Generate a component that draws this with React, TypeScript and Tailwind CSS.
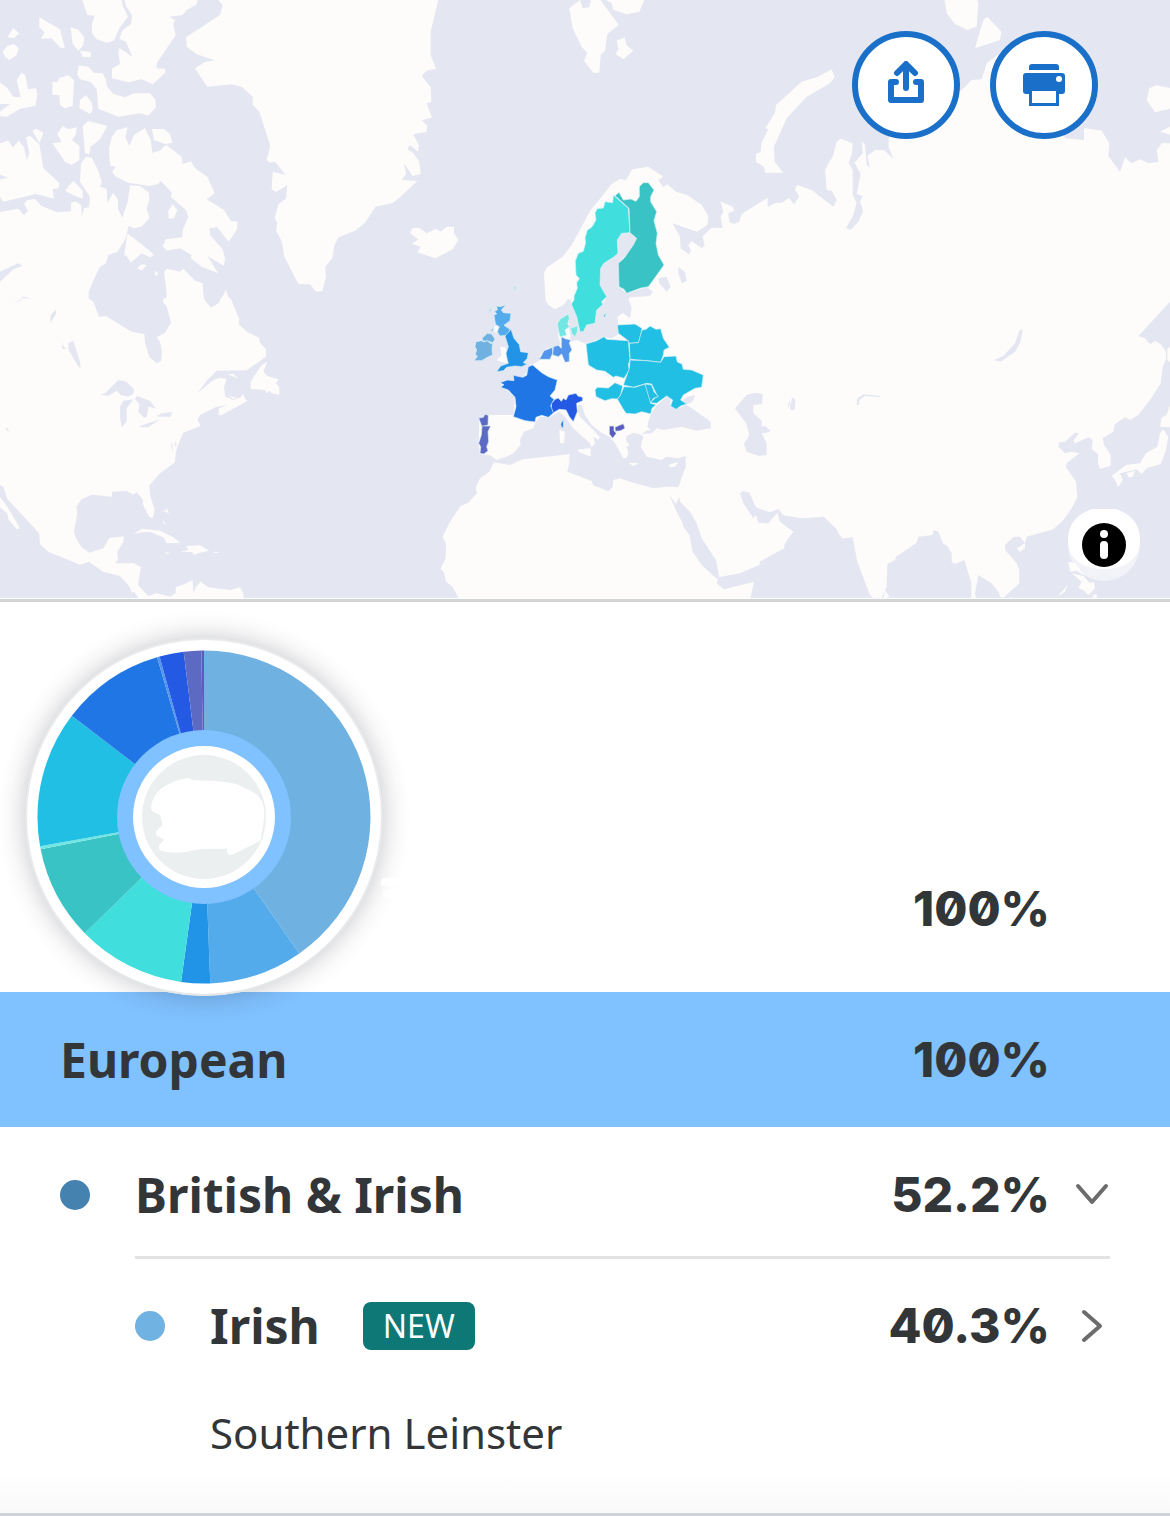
import { useState } from "react";

type Shape = { fill: string; d: string };
type Slice = { color: string; value: number };

const slices: Slice[] = [
  { color: "#6fb1e1", value: 40.3 },
  { color: "#54abec", value: 9.1 },
  { color: "#2294e7", value: 2.8 },
  { color: "#40dedd", value: 10.5 },
  { color: "#3ac3c5", value: 9.2 },
  { color: "#72e6e2", value: 0.3 },
  { color: "#22bfe4", value: 13.2 },
  { color: "#2176e6", value: 10.05 },
  { color: "#5595ec", value: 0.25 },
  { color: "#2359e3", value: 2.35 },
  { color: "#5c6ac4", value: 1.7 },
  { color: "#5b5bc0", value: 0.25 },
];

// The map is split in six tiles, each with its own origin
const northWestLand = [
  "M0 636 55 626 72 646 84 632 72 612 82 600 105 597 125 618 145 626 172 637 213 634 213 610 225 604 243 614 246 650 252 625 267 622 270 590 240 545 243 490 258 470 276 474 295 512 305 545 300 560 320 566 322 608 340 578 354 600 354 628 367 653 383 606 390 556 420 558 447 578 448 600 440 625 448 655 425 680 402 685 386 678 376 718 352 755 325 765 318 790 300 800 283 835 266 875 266 905 0 905Z",
  "M498 905 500 880 492 815 500 806 540 815 550 806 585 842 608 850 612 905Z M660 905 677 870 692 905Z",
  "M40 84 58 100 42 114 22 112Z M8 155 22 138 42 132 56 145 50 165 28 180 15 170Z M118 52 180 88 195 146 180 142 155 115 122 116 134 97 118 82Z",
  "M212 82 235 90 253 112 250 135 235 152 218 132Z M240 152 272 156 273 172 248 170Z",
  "M245-5 262 45 284 47 275 75 276 100 290 118 320 128 342 122 358 85 384 50 367 15 365-5Z",
  "M372-5 378 18 396 46 393 72 368 90 358 116 378 125 397 170 358 144 355 158 360 192 336 206 336 235 385 247 425 238 458 253 497 217 495 206 470 205 470 190 527 106 520 72 525 60 508 50 548 45 560 30 588 15 595-5Z",
  "M232 222 236 196 265 200 282 218 308 220 318 240 320 258 340 282 375 292 402 280 450 280 466 298 468 322 445 347 420 340 355 350 295 326 290 268 272 246 240 238Z",
  "M258 285 276 310 278 330 270 342 238 324 240 300Z M157 245 172 246 178 234 205 226 222 240 218 318 195 325 180 316 178 286 157 284Z",
  "M0 248 20 262 40 290 62 292 50 240 65 218 76 226 84 268 108 264 112 285 106 318 60 326 20 350 0 348 0 335 30 312 0 312Z",
  "M97 392 108 386 130 398 118 428Z M172 402 188 378 205 388 230 382 228 402 216 420 238 438 238 480 215 495 195 485 157 430 185 426Z M248 378 265 363 322 378 300 418 272 440 268 463 255 460Z",
  "M0 430 25 422 38 442 57 422 72 442 80 480 88 460 78 412 90 408 118 432 130 505 178 548 176 565 158 568 162 596 108 582 10 605 0 590 0 538 25 533 0 524Z",
  "M195 572 220 542 248 572 248 596 225 588Z M378 765 372 770 382 700 440 745 462 765 450 772 425 760 392 788Z M412 805 425 793 440 796 425 812Z M462 812 475 820 468 830Z M505 632 518 612 532 630 522 655 506 656Z",
  "M330 497 327 445 335 412 350 390 383 382 376 412 388 437 402 405 435 384 452 420 457 458 480 452 498 434 545 470 548 492 572 484 588 508 622 530 644 580 620 598 672 630 692 662 713 665 710 690 686 725 652 682 628 685 630 705 668 748 675 775 672 797 622 768 655 820 605 800 572 775 575 765 540 745 500 752 488 738 498 718 547 712 548 690 565 650 558 630 512 590 516 578 482 542 475 552 448 558 385 548 348 530 336 515 348 500Z",
  "M456 387 492 387 510 402 517 428 495 432 462 420Z",
  "M650-5 668 15 660 45 558 112 560 140 590 163 645 181 615 186 585 205 622 260 695 253 725 260 758 290 758 315 778 335 811 438 800 480 810 488 825 485 856 524 818 516 815 568 828 576 862 556 858 596 835 612 824 655 832 668 828 692 846 725 852 768 895 852 930 853 948 875 967 874 978 830 976 800 997 775 1003 735 1016 712 1065 692 1095 668 1127 620 1180 608 1200 592 1252 543 1205 540 1218 522 1212 490 1238 528 1262 522 1258 485 1240 460 1222 448 1230 435 1254 455 1256 435 1240 403 1280 395 1282 378 1266 360 1296 353 1280 310 1294 305 1292 262 1265 228 1280 212 1308 206 1292 165 1292 95 1316-5Z",
];

const southWestLand = [
  "M0-5 265-5 280 5 297 50 318 48 395 95 433 102 435 128 448 170 470 190 484 182 486 155 480 125 470 112 495 98 513 68 500 20 488 5 492-5 612-5 618 5 633 23 658 8 662-5 692-5 718 58 716 73 742 96 777 113 780 128 798 148 798 170 780 183 740 211 650 212 622 240 592 280 640 240 658 234 680 236 672 262 676 290 700 300 722 292 730 282 735 298 743 302 664 346 656 345 657 325 682 314 650 320 600 345 592 358 602 378 550 398 536 430 528 455 524 488 480 520 448 556 450 585 464 630 458 654 448 652 428 612 430 600 410 577 400 584 380 573 337 575 335 590 275 584 245 598 230 618 231 645 222 695 228 715 245 742 268 758 310 745 328 714 371 709 370 725 352 755 354 780 345 790 402 790 423 802 414 855 444 888 470 880 510 890 527 880 527 862 552 853 578 840 580 880 588 860 602 845 625 862 690 870 720 862 730 880 730 900 420 900 402 875 395 878 390 862 360 828 310 815 267 785 240 794 145 755 120 732 118 702 100 680 22 597 10 560 0 555Z",
  "M0 590 22 620 60 685 50 688 25 658 22 640 0 622Z",
  "M752 267 752 245 785 195 802 185 790 215 802 228 835 238 828 250 838 262 838 285 815 280 808 272 800 280 795 270Z M680 222 700 222 715 235Z M680 282 695 290 710 292 700 298Z",
  "M402 702 425 686 480 692 520 712 542 728 500 730 490 712 450 696 425 697Z M540 755 565 750 558 738 600 736 628 752 600 758 583 764 575 756Z M492 757 515 759 500 762Z M638 755 662 757 645 760Z M480 630 498 632 500 622 507 640Z M488 658 500 678 490 668Z",
];

const northLand = [
  "M508 25 540 0 548 25 568 22 574-5 598-5 656 75 622 102 615 152 602 165 598 218 580 218 552 182 562 160 545 140 518 85Z",
  "M610-5 635 10 640 30 680 43 718 35 735-5Z M650 122 674 112 680 135 700 152 670 178 647 162 656 148Z",
  "M30 700 38 683 60 685 80 700 108 686 122 695 140 680 162 680 162 700 175 720 158 748 106 775 52 757 62 740 35 732 55 718Z",
  "M437 905 432 820 440 803 490 768 515 735 572 630 605 590 635 552 660 537 678 540 697 508 745 500 790 530 775 540 790 562 802 553 828 575 862 585 905 615 925 648 922 675 890 695 860 685 818 670 840 710 842 745 868 764 872 750 865 735 875 724 905 744 914 738 908 708 935 683 968 684 962 650 970 635 962 605 998 620 1003 632 985 640 988 665 1002 672 1018 665 1025 642 1103 593 1103 620 1130 608 1130 905 690 905 690 892 750 888 758 875 742 862 680 880 657 860 655 790 700 740 710 715 690 698 665 700 652 720 652 760 615 790 600 805 600 855 620 890 612 905 522 905 500 895 490 905Z",
];

const southLand = [
  "M1205-5 685-5 695 25 690 55 668 38 652 52 655 75 655 103 635 115 610 112 558 132 530 120 510 125 512 110 505 80 508 50 500 42 472 65 475 110 482 135 440 145 420 165 420 180 395 195 370 230 340 240 300 250 325 272 345 292 340 345 265 345 238 355 236 430 240 462 270 466 290 480 325 468 340 460 362 435 360 420 372 395 400 385 405 370 420 350 448 352 478 335 495 350 520 385 570 430 575 442 585 430 580 410 595 420 600 412 580 390 540 350 532 330 535 315 545 315 555 345 575 375 605 398 628 410 645 430 670 475 680 475 685 458 680 440 688 436 678 420 680 408 700 398 725 405 730 412 722 440 740 470 785 480 800 470 835 475 857 468 857 500 835 562 800 560 760 565 690 545 660 535 640 540 638 560 625 574 580 556 575 543 502 515 508 490 508 462 488 465 368 478 330 495 282 487 268 515 240 535 228 560 230 580 205 608 182 618 150 665 128 710 138 732 137 775 122 805 133 820 138 845 158 860 178 900 1050 900 1062 845 972 868 950 850 955 832 1020 820 1078 795 1080 785 1152 745 1155 730 1180 695 1140 665 1132 638 1105 670 1075 668 1068 645 1060 655 1030 610 1020 580 1030 573 1048 578 1068 622 1110 637 1135 627 1150 645 1205 655Z",
  "M437-5 438 0 445 15 465 28 490 15 505-5Z M512-5 515 10 530 55 540 92 550 95 560 75 585 70 590 30 612-5Z",
  "M478 390 495 395 492 430 480 428Z M535 448 572 445 572 470 535 455Z M685 488 718 490 700 498Z M805 495 835 485 825 500 810 502Z M300 140 318 142 322 190 300 185 290 180 305 165Z M282 80 296 72 292 98 284 95Z",
];

const northEastLand = [
  "M18 315 95 245 140 232 185 208 194 232 180 250 110 290 50 355 12 440 14 485 40 518-15 518-18 500-42 485-42 462-28 455-26 430-5 388-14 385 15 338Z",
  "M0 622 15 610 35 608 57 594 72 613 88 590 75 568 82 555 125 570 190 620 200 600 185 572 170 570 165 510 190 465 200 425 212 416 248 430 246 460 236 488 248 510 248 585 260 608 248 650 228 684 242 690 265 665 280 632 270 605 278 588 260 582 272 522 254 488 278 460 276 424 285 435 290 495 300 502 292 468 315 450 342 450 370 476 356 440 356 415 400 350 575 270 605 240 635 238 650 190 690 160 800 200 885 415 942 420 942 384 995 392 1018 430 1015 468 1050 516 1065 472 1085 490 1110 478 1135 490 1165 485 1160 450 1175 430 1205 430 1205 905 0 905Z",
  "M523-5 530 40 555 72 592 90 620 80 625 10 620-5Z M640 60 652 50 694 95 690 120 615 145Z M1130 300 1138 265 1160 256 1205 265 1205 325 1155 337Z M1170 395 1205 378 1205 405Z",
];

const southEastLand = [
  "M-5-5 1205-5 1200 5 1105 108 1125 115 1140 133 1155 122 1175 135 1188 155 1188 178 1178 200 1172 250 1140 300 1105 345 1080 360 1065 352 1035 372 1030 395 998 415 1002 435 1022 465 1022 497 990 507 984 490 984 462 965 447 968 420 955 412 915 430 910 422 927 400 915 398 885 425 868 427 865 440 885 460 905 455 928 460 890 490 888 502 918 545 922 590 905 625 880 660 850 688 770 710 765 730 750 710 732 710 705 735 705 750 740 790 748 810 748 850 700 893 690 890 687 878 665 850 625 825 615 880 620 905 604 905 604 848 583 780 555 792 545 785 545 760 530 735 520 732 505 695 490 690 488 705 445 710 440 728 378 770 375 780 352 792 350 860 335 893 310 893 300 885 262 785 248 712 218 716 205 700 200 688 162 650 100 655 40 645 25 625 0 635Z",
  "M1205 300 1190 345 1175 352 1170 380 1205 382Z M1180 388 1195 410 1188 450 1172 492 1130 505 1115 522 1100 508 1050 520 1058 540 1045 562 1035 540 1025 528 1068 495 1110 490 1128 460 1162 440 1170 400Z M1070 520 1095 512 1088 530 1075 532Z",
  "M1192 145 1205 140 1205 190 1192 180Z M740 745 765 730 765 745 750 756Z M345 870 358 890 340 897Z M895 785 915 790 945 828 920 812 900 815Z M905 820 940 828 960 850 972 845 975 865 955 885 940 870 925 865 935 845Z M862 890 893 855 885 875Z M965 890 980 880 980 897Z",
];

const northWestWater = ["M0 815 55 790 68 797 40 808 0 845Z M55 897 70 890 108 897Z"];

const southWestWater = [
  "M302 284 315 280 355 240 380 245 402 268 400 282 385 290 362 285 350 272 325 288Z",
  "M360 320 370 302 400 298 380 325 380 365 365 382 360 350Z M405 298 412 288 450 303 467 325 445 320 440 352 430 352 415 335 418 312Z",
  "M420 378 480 358 445 382 422 382Z M470 348 485 340 517 336 512 350 476 350Z M205 130 220 122 240 185 242 206 232 195 205 148Z",
  "M187 125 190 138 198 146 187 148Z M152 45 168 30 168 42 150 70Z M38 12 60 0 70-3 60 2Z M15 382 24 386 26 398Z M512 428 518 436 520 462 516 445Z M528 422 530 440 524 436Z",
];

const northWater = ["M775 835 800 830 812 862 800 875 778 850Z M835 800 855 815 860 842 845 850 835 820Z"];

const southWater = [
  "M808 585 828 612 838 590 840 605 870 635 890 670 905 715 948 780 958 834 950 836 905 795 878 755 868 705 850 680 848 670 830 635Z",
  "M742 380 745 365 752 345 768 318 800 290 815 295 810 310 825 328 860 315 880 328 932 365 932 385 890 392 845 380 790 390 770 385 755 400 725 402 740 392 752 390Z",
  "M848 300 862 290 885 285 878 305 855 315Z",
  "M1005 325 1040 285 1065 278 1088 282 1086 312 1060 315 1060 340 1085 362 1085 380 1095 378 1112 392 1100 398 1085 400 1100 430 1100 465 1078 468 1040 455 1032 432 1048 405 1038 370Z",
  "M1162 328 1168 300 1172 318 1176 292 1186 300 1184 330 1172 330 1170 312Z",
];

const southEastWater = [
  "M260 315 262 295 280 283 330 288 330 292 285 288 268 300 267 315Z",
  "M672 180 700 168 735 130 748 92 758 88 750 130 735 155 692 185Z",
];

// Regions found in the results, placed on the southern Europe tile
const regions: Shape[] = [
  { fill: "#6fb1e1", d: "M222 182 232 170 226 162 230 150 225 140 228 125 245 122 250 126 262 122 270 130 278 130 276 148 278 165 262 172 245 182Z" },
  { fill: "#6fb1e1", d: "M246 115 262 100 275 102 285 118 278 128 262 122 250 124Z" },
  { fill: "#54abec", d: "M285 65 282 45 290 42 284 34 292 30 290 18 302 20 318 14 304 30 310 38 333 40 330 62 312 76 330 88 325 105 300 108 292 95 298 80 288 75Z M266 40 274 18 272 32Z M272 92 280 82 278 94Z" },
  { fill: "#2294e7", d: "M315 108 333 88 342 115 358 134 362 155 385 158 382 175 370 188 382 192 365 200 345 198 320 202 310 212 290 215 302 198 325 190 322 180 318 160 325 140Z" },
  { fill: "#2176e6", d: "M300 248 322 240 342 242 340 226 368 232 380 226 385 200 398 195 425 218 445 230 472 240 465 270 450 288 462 298 452 318 464 336 445 352 425 346 408 352 405 366 375 362 340 350 348 320 345 292 325 270 302 262 312 254Z" },
  { fill: "#2176e6", d: "M482 372 490 358 490 382 485 384Z" },
  { fill: "#2359e3", d: "M455 310 465 298 475 294 484 304 490 295 498 300 505 285 528 280 534 288 548 292 548 302 530 310 532 335 520 365 508 350 498 330 478 328 460 338 454 322Z" },
  { fill: "#5595ec", d: "M418 178 432 152 458 142 458 160 450 178Z" },
  { fill: "#5595ec", d: "M460 140 475 136 484 145 484 110 496 116 512 120 508 130 516 150 508 160 508 185 495 187 485 162 475 170 458 165Z" },
  { fill: "#72e6e2", d: "M472 70 482 56 505 42 508 55 503 72 508 80 495 90 500 106 480 110 475 90Z M512 85 533 78 532 95 525 110 515 100Z" },
  { fill: "#3ac3c5", d: "M610 48 620 36 615 52Z M342-40 346-40 346-24Z" },
  { fill: "#40dedd", d: "M640-315 685-275 690-202 665-200 652-180 654-140 640-128 612-110 602-95 600-45 620-10 605 5 608 14 590 30 585 70 560 75 550 95 540 95 530 50 514 12 522 0 522-12 532-35 530-52 538-64 528-75 526-118 535-140 550-146 557-172 555-186 562-210 575-218 588-240 585-262 592-274 610-276 615-295 638-292Z" },
  { fill: "#3ac3c5", d: "M645-313 657-323 670-300 692-303 708-296 718-310 718-340 730-352 745-352 762-330 752-310 752-295 770-265 762-238 772-200 768-170 775-135 792-105 760-60 745-40 720-35 680-20 672-32 657-40 655-110 672-125 700-165 710-185 690-202 687-275Z" },
  { fill: "#22bfe4", d: "M652 75 705 72 726 85 722 108 715 128 688 130 682 120 655 100Z" },
  { fill: "#22bfe4", d: "M726 90 738 88 750 78 768 88 782 86 790 115 808 142 792 150 790 165 782 187 740 182 690 178 688 130 715 128Z" },
  { fill: "#22bfe4", d: "M558 132 590 122 612 110 620 118 685 122 690 178 685 195 688 210 672 235 648 228 640 232 615 214 590 210 565 195Z" },
  { fill: "#22bfe4", d: "M690 180 740 182 782 187 792 170 828 168 832 186 846 192 850 208 875 210 910 225 905 262 885 265 850 285 842 300 860 312 842 318 828 328 812 318 818 300 800 288 770 310 750 308 772 288 755 252 740 250 700 262 670 255 688 205Z" },
  { fill: "#22bfe4", d: "M585 270 592 262 625 264 645 248 668 258 662 285 652 297 635 296 615 302 588 290Z" },
  { fill: "#22bfe4", d: "M652 297 660 288 672 260 705 262 735 252 750 285 752 310 768 314 756 325 752 342 725 335 705 342 678 340 668 325Z" },
  { fill: "#22bfe4", d: "M735 252 755 255 762 275 775 290 760 295 752 310Z" },
  { fill: "#5c6ac4", d: "M236 354 250 352 255 343 265 346 264 375 246 380Z" },
  { fill: "#5c6ac4", d: "M246 378 272 378 264 395 266 425 260 440 264 452 252 462 240 460 242 440 236 430 244 405Z" },
  { fill: "#5b5bc0", d: "M628 378 642 378 642 392 649 400 638 415 628 402Z" },
  { fill: "#5b5bc0", d: "M645 382 660 375 670 371 675 385 662 392 646 394Z" },
];

function MapTile({ x, y, land, water = [] }: { x: number; y: number; land: string[]; water?: string[] }) {
  return (
    <g transform={`translate(${x} ${y})`}>
      <path d={land.join(" ")} fill="#fdfcfa" />
      <path d={water.join(" ")} fill="#e4e6f1" />
    </g>
  );
}

function WorldMap() {
  return (
    <svg viewBox="0 0 3510 1797" className="block w-full h-auto bg-[#e4e6f1]" role="img" aria-label="Map of your regions">
      <MapTile x={0} y={0} land={northWestLand} water={northWestWater} />
      <MapTile x={0} y={900} land={southWestLand} water={southWestWater} />
      <MapTile x={2310} y={0} land={northEastLand} />
      <MapTile x={2310} y={900} land={southEastLand} water={southEastWater} />
      <MapTile x={1200} y={0} land={northLand} water={northWater} />
      <MapTile x={1200} y={900} land={southLand} water={southWater} />
      <g transform="translate(1200 900)" stroke="#d9f1f5" strokeWidth="2" strokeLinejoin="round">
        {regions.map((region) => (
          <path key={region.d} d={region.d} fill={region.fill} />
        ))}
      </g>
      <path d="M0 1795H3510" stroke="#ffffff" strokeWidth="3" />
    </svg>
  );
}

function slicePath(from: number, to: number) {
  const point = (value: number) => {
    const angle = (value / 100) * 2 * Math.PI;
    return `${(177 + 166.5 * Math.sin(angle)).toFixed(2)} ${(177 - 166.5 * Math.cos(angle)).toFixed(2)}`;
  };
  return `M177 177 L${point(from)} A166.5 166.5 0 ${to - from > 50 ? 1 : 0} 1 ${point(to)}Z`;
}

function Donut() {
  let total = 0;
  return (
    <div className="relative z-10 size-[354px] shrink-0 rounded-full bg-white shadow-[0_2px_0_#e4e7e8,0_0_0_2px_#e8eaeb,0_0_28px_rgba(40,45,60,0.32)]">
      <svg viewBox="0 0 354 354" className="block size-full overflow-visible" role="img" aria-label="Ancestry breakdown">
        {slices.map((slice) => {
          const from = total;
          total += slice.value;
          return <path key={slice.color} d={slicePath(from, total)} fill={slice.color} />;
        })}
        <circle cx="177" cy="177" r="87" fill="#80c1ff" />
        <circle cx="177" cy="177" r="71" fill="#ffffff" />
        <circle cx="177" cy="177" r="62" fill="#ebeff0" />
        <path
          d="M129 163 C132 150 150 144 161 142 C158 146 190 143 208 148 L221 154 C236 160 234 175 232 186 L230 198 L204 211 L208 204 C190 206 178 203 162 207 C150 210 140 208 136 207 L144 198 L133 193 L140 186 L137 173 L128 168Z"
          fill="#ffffff"
          stroke="#ffffff"
          strokeWidth="8"
          strokeLinejoin="round"
        />
        <path d="M358 242H370 M360 254H372" stroke="#ffffff" strokeWidth="8" strokeLinecap="round" />
      </svg>
    </div>
  );
}

function ShareIcon() {
  return (
    <svg viewBox="0 0 48 48" className="size-12" fill="none" stroke="#1a70c9" strokeWidth="6" strokeLinecap="round" strokeLinejoin="round">
      <path d="M24 27V5 M15 12 24 3 33 12 M14 21H9V39H39V21H34" />
    </svg>
  );
}

function PrintIcon() {
  return (
    <svg viewBox="0 0 48 48" className="size-12" fill="#1a70c9">
      <path d="M9 9V6Q9 3 12 3H36Q39 3 39 6V9Z" />
      <rect x="3" y="12" width="42" height="21" rx="3" />
      <circle cx="39" cy="18" r="3" fill="#ffffff" />
      <rect x="9" y="30" width="30" height="15" />
      <rect x="12" y="30" width="24" height="12" fill="#ffffff" />
    </svg>
  );
}

function InfoIcon() {
  return (
    <svg viewBox="0 0 72 72" className="size-full">
      <circle cx="36" cy="36" r="36" fill="#ffffff" fillOpacity="0.5" />
      <path d="M24 0H48Q72 8 72 31C72 50 57 60 36 60S0 50 0 31Q0 8 24 0Z" fill="#ffffff" />
      <circle cx="36" cy="36" r="22" fill="#000000" />
      <circle cx="36" cy="25" r="4" fill="#ffffff" />
      <rect x="32" y="32" width="8" height="18" rx="4" fill="#ffffff" />
    </svg>
  );
}

function Chevron({ d }: { d: string }) {
  return (
    <svg viewBox="0 0 36 36" className="size-9" fill="none" stroke="#6c6c6c" strokeWidth="4" strokeLinecap="round" strokeLinejoin="round">
      <path d={d} />
    </svg>
  );
}

function Percent({ value }: { value: string }) {
  return <span className="ml-auto font-['Inter','Liberation_Sans',sans-serif] text-[48px] leading-14 font-extrabold slashed-zero">{value}</span>;
}

export default function App() {
  const [isOpen, setIsOpen] = useState(true);

  return (
    <main className="bg-white font-['Noto_Sans','Open_Sans',sans-serif] text-[#323638]">
      {/* Map */}
      <section className="relative border-b-3 border-[#d3d4d5]">
        <WorldMap />
        <div className="absolute top-[31px] right-[72px] flex gap-[30px]">
          <button type="button" aria-label="Share" className="flex size-[108px] items-center justify-center rounded-full border-6 border-[#1a70c9] bg-white">
            <ShareIcon />
          </button>
          <button type="button" aria-label="Print" className="flex size-[108px] items-center justify-center rounded-full border-6 border-[#1a70c9] bg-white">
            <PrintIcon />
          </button>
        </div>
        <button type="button" aria-label="Map information" className="absolute right-[30px] bottom-[18px] size-[72px] rounded-full">
          <InfoIcon />
        </button>
      </section>

      {/* Totals */}
      <section className="flex items-end pt-[38px] pr-[120px] pl-[27px]">
        <div className="-mb-[2px]">
          <Donut />
        </div>
        <div className="ml-auto flex pb-[55px]">
          <Percent value="100%" />
        </div>
      </section>

      <section className="flex h-[135px] items-center bg-[#80c1ff] pr-[120px] pl-[60px]">
        <h1 className="text-[48px] leading-14 font-bold">European</h1>
        <Percent value="100%" />
      </section>

      {/* Regions */}
      <section className="px-[60px]">
        <div className="flex h-[129px] items-center pt-[6px]">
          <span className="mr-[45px] size-[30px] rounded-full bg-[#4682b0]" />
          <h2 className="text-[48px] leading-14 font-bold">British &amp; Irish</h2>
          <Percent value="52.2%" />
          <button type="button" aria-label="Toggle British & Irish" aria-expanded={isOpen} onClick={() => setIsOpen(!isOpen)} className="ml-6">
            <Chevron d="M4 9 18 25 32 9" />
          </button>
        </div>

        {isOpen && (
          <div className="ml-[75px] border-t-3 border-[#e1e4e3]">
            <div className="flex h-[134px] items-center">
              <span className="mr-[45px] size-[30px] rounded-full bg-[#70b2e1]" />
              <h3 className="text-[48px] leading-14 font-bold">Irish</h3>
              <span className="ml-[43px] flex h-12 items-center rounded-lg bg-[#0e7877] px-5 text-[32px] leading-12 text-white">NEW</span>
              <Percent value="40.3%" />
              <button type="button" aria-label="Show Irish details" className="ml-6">
                <Chevron d="M10 4 26 18 10 32" />
              </button>
            </div>
            <p className="py-[14px] pl-[75px] text-[42px] leading-[52px]">Southern Leinster</p>
          </div>
        )}
      </section>
      <footer className="h-[43px] border-b-3 border-[#d0d2d9] bg-linear-to-b from-white to-[#f9f9fa]" />
    </main>
  );
}
